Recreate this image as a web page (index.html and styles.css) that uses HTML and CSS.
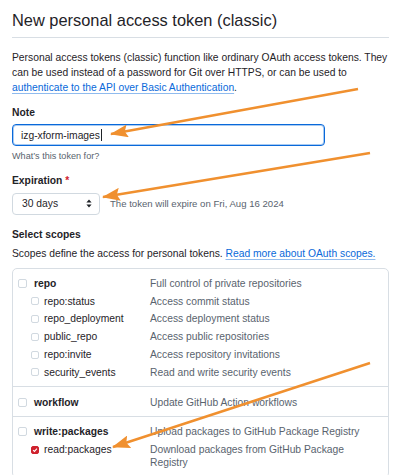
FILE: index.html
```html
<!DOCTYPE html>
<html lang="en">
<head>
<meta charset="utf-8">
<title>New personal access token (classic)</title>
<link rel="stylesheet" href="styles.css">
</head>
<body>
<main class="page">
  <h1 class="title">New personal access token (classic)</h1>
  <p class="intro">Personal access tokens (classic) function like ordinary OAuth access tokens. They can be used instead of a password for Git over HTTPS, or can be used to <a href="#">authenticate to the API over Basic Authentication</a>.</p>

  <div class="field">
    <label class="label">Note</label>
    <div class="input">izg-xform-images<span class="caret"></span></div>
    <p class="hint">What’s this token for?</p>
  </div>

  <div class="field field-exp">
    <label class="label">Expiration <span class="req">*</span></label>
    <div class="exp-row">
      <div class="select">30 days
        <svg class="chev" width="6" height="9" viewBox="0 0 6 9"><path d="M3 0.5 L5.6 3.6 H0.4 Z M3 8.5 L5.6 5.4 H0.4 Z" fill="#1f2328"/></svg>
      </div>
      <span class="hint-inline">The token will expire on Fri, Aug 16 2024</span>
    </div>
  </div>

  <h2 class="label scopes-title">Select scopes</h2>
  <p class="scopes-desc">Scopes define the access for personal tokens. <a href="#">Read more about OAuth scopes.</a></p>

  <div class="scopes">
    <div class="group">
      <div class="row"><div class="name"><span class="cb"></span><b>repo</b></div><div class="desc">Full control of private repositories</div></div>
      <div class="row"><div class="name sub"><span class="cb"></span>repo:status</div><div class="desc">Access commit status</div></div>
      <div class="row"><div class="name sub"><span class="cb"></span>repo_deployment</div><div class="desc">Access deployment status</div></div>
      <div class="row"><div class="name sub"><span class="cb"></span>public_repo</div><div class="desc">Access public repositories</div></div>
      <div class="row"><div class="name sub"><span class="cb"></span>repo:invite</div><div class="desc">Access repository invitations</div></div>
      <div class="row"><div class="name sub"><span class="cb"></span>security_events</div><div class="desc">Read and write security events</div></div>
    </div>
    <div class="group">
      <div class="row"><div class="name"><span class="cb"></span><b>workflow</b></div><div class="desc">Update GitHub Action workflows</div></div>
    </div>
    <div class="group">
      <div class="row"><div class="name"><span class="cb"></span><b>write:packages</b></div><div class="desc">Upload packages to GitHub Package Registry</div></div>
      <div class="row"><div class="name sub"><span class="cb checked"><svg width="8" height="8" viewBox="0 0 8 8"><path d="M1.5 4.1 L3.3 5.9 L6.6 2.1" fill="none" stroke="#fff" stroke-width="1.5"/></svg></span>read:packages</div><div class="desc">Download packages from GitHub Package Registry</div></div>
    </div>
  </div>

  <svg class="arrows" width="400" height="475" viewBox="0 0 400 475">
    <defs>
      <marker id="ah" markerWidth="18" markerHeight="13" refX="17" refY="6.5" orient="auto" markerUnits="userSpaceOnUse">
        <path d="M0 0 L18 6.5 L0 13 L3 6.5 Z" fill="#f0902f"/>
      </marker>
    </defs>
    <line x1="358" y1="89" x2="111" y2="134" stroke="#f0902f" stroke-width="2.5" marker-end="url(#ah)"/>
    <line x1="370" y1="153" x2="103" y2="197" stroke="#f0902f" stroke-width="2.5" marker-end="url(#ah)"/>
    <line x1="370" y1="363" x2="113" y2="447" stroke="#f0902f" stroke-width="2.5" marker-end="url(#ah)"/>
  </svg>
</main>
</body>
</html>
```

FILE: styles.css
```css
* { box-sizing: border-box; }
html, body { margin: 0; padding: 0; background: #fff; }
body {
  font-family: "Liberation Sans", Arial, sans-serif;
  font-size: 10.3px;
  color: #1f2328;
  width: 400px;
  height: 475px;
  overflow: hidden;
}
.page {
  position: relative;
  padding: 8px 11px 0 12px;
  height: 475px;
}
.title {
  margin: 0;
  font-size: 16.4px;
  font-weight: 400;
  line-height: 24px;
  padding-bottom: 5px;
  border-bottom: 1px solid #d8dee4;
}
.intro {
  margin: 12px 0 0;
  line-height: 15px;
}
a { color: #0969da; text-decoration: underline; text-decoration-color: rgba(9,105,218,0.45); text-underline-offset: 2px; }
.field { margin-top: 10.5px; }
.field-exp { margin-top: 12px; }
.label {
  display: block;
  font-weight: 700;
  font-size: 10.3px;
  line-height: 14px;
  margin: 0 0 4.5px;
}
.req { color: #cf222e; }
.input {
  width: 313px;
  height: 22px;
  border: 1px solid #0969da;
  box-shadow: inset 0 0 0 1px rgba(9,105,218,0.35);
  border-radius: 4px;
  padding: 0 8px;
  display: flex;
  align-items: center;
}
.caret { display: inline-block; width: 1px; height: 12px; background: #1f2328; margin-left: 1px; }
.hint { margin: 4px 0 0; color: #59636e; font-size: 9.1px; line-height: 12px; }
.exp-row { display: flex; align-items: center; gap: 10px; }
.select {
  width: 88px;
  height: 22px;
  border: 1px solid #d1d9e0;
  border-radius: 4px;
  background: #fff;
  display: flex;
  align-items: center;
  justify-content: space-between;
  padding: 0 7px 0 9px;
}
.hint-inline { color: #59636e; font-size: 9.6px; }
.scopes-title { margin: 13px 0 0; }
.scopes-desc { margin: 5px 0 0; line-height: 14px; }
.scopes {
  margin-top: 7px;
  border: 1px solid #d8dee4;
  border-radius: 5px;
}
.group { padding: 6px 0 5px; border-top: 1px solid #d8dee4; }
.group:first-child { border-top: 0; }
.row { display: flex; padding: 2.4px 0; line-height: 13px; }
.name { width: 137px; padding-left: 5px; display: flex; align-items: flex-start; gap: 7px; flex: none; }
.name.sub { padding-left: 18px; gap: 5px; }
.name b { font-weight: 700; }
.cb {
  width: 9px; height: 9px; margin-top: 2px;
  border: 1px solid #d1d9e0; border-radius: 2px; flex: none;
  display: flex; align-items: center; justify-content: center;
}
.name.sub .cb { width: 8px; height: 8px; margin-top: 2.5px; }
.cb.checked { background: #cf222e; border-color: #cf222e; }
.desc { color: #59636e; width: 222px; }
.arrows { position: absolute; left: 0; top: 0; pointer-events: none; }
```
